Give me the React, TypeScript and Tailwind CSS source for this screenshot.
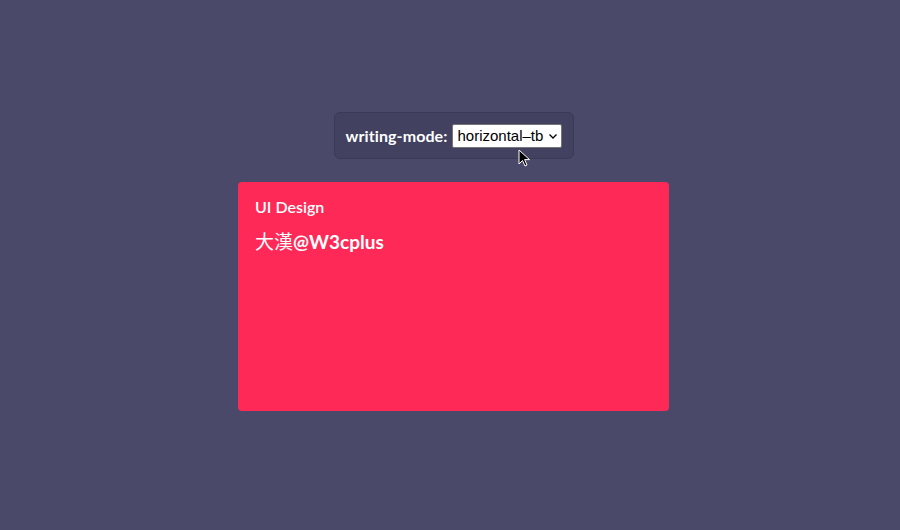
import React from "react";

export default function App() {
  return (
    <div className="w-[900px] h-[530px] bg-[#4a4969] flex flex-col items-center pt-[112px] pl-[7px]" style={{ fontFamily: "Lato, 'Noto Sans', sans-serif" }}>
      <div className="relative flex items-center gap-[5px] h-[47px] w-[240px] pl-[11px] rounded-[6px] bg-[#42415f] border border-[#3a3956]">
        <span className="text-white font-bold text-[16px] tracking-[0.1px]">writing-mode:</span>
        <div className="flex items-center h-[24px] w-[110px] bg-white rounded-[2px] border border-[#767676] pl-[4px] pr-[3px]" style={{ fontFamily: "'Liberation Sans', Arial, sans-serif" }}>
          <span className="text-black text-[15px] leading-none">horizontal–tb</span>
          <svg className="ml-auto" width="10" height="10" viewBox="0 0 10 10">
            <path d="M1.5 3.5 L5 7 L8.5 3.5" stroke="#000" strokeWidth="1.3" fill="none" />
          </svg>
        </div>
        <svg className="absolute left-[183px] top-[36px]" width="14" height="20" viewBox="0 0 14 20">
          <path d="M1 1 L1 15 L4.5 11.5 L7 17 L9 16 L6.6 10.6 L11.5 10.6 Z" fill="#000" stroke="#fff" strokeWidth="1" strokeLinejoin="round" />
        </svg>
      </div>
      <div className="mt-[23px] w-[431px] h-[229px] rounded-[4px] bg-[#ff2958] px-[17px] pt-[15px]">
        <div className="text-white text-[16px] font-semibold leading-[20px]">UI Design</div>
        <div className="mt-[13px] text-white text-[19px] font-bold leading-[24px]" style={{ fontFamily: "Lato, 'Noto Sans CJK TC', sans-serif" }}>
          <span className="font-normal">大漢</span>@W3cplus
        </div>
      </div>
    </div>
  );
}
